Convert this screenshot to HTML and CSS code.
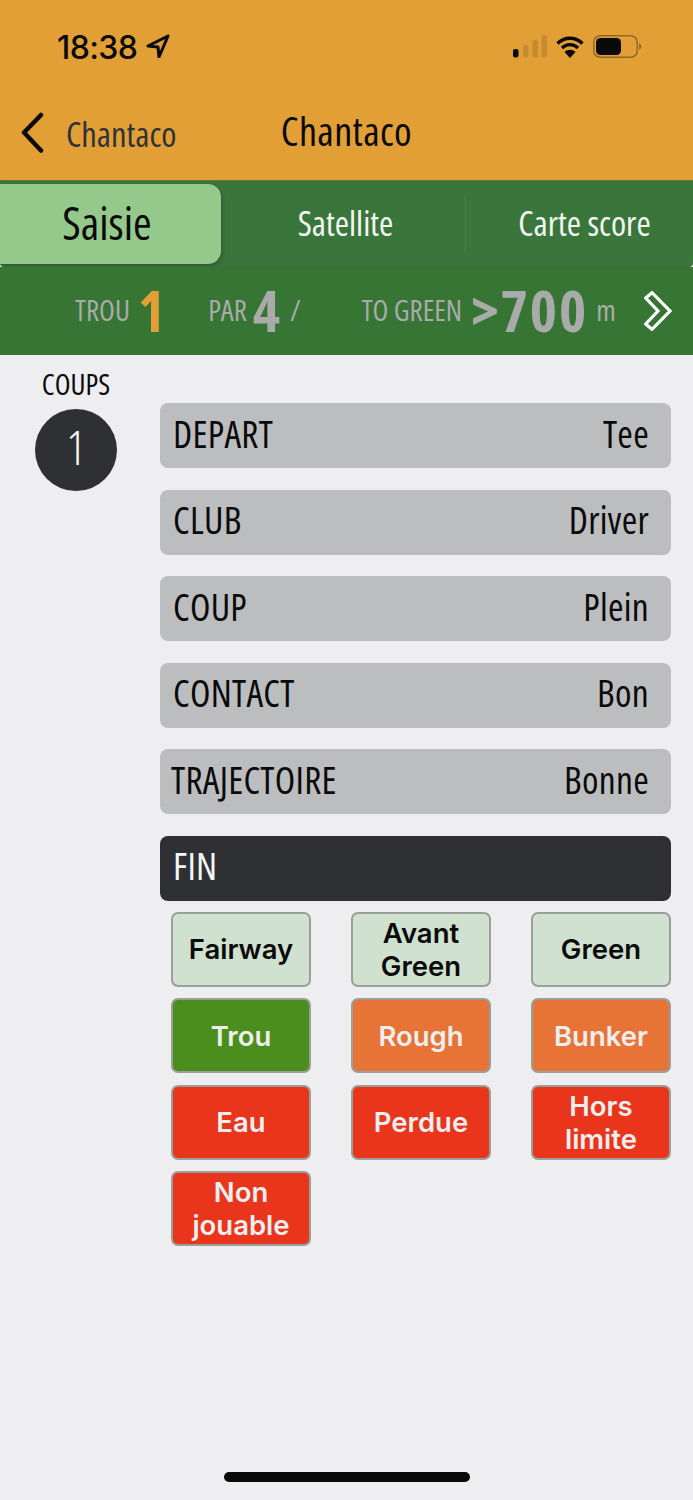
FILE: index.html
```html
<!DOCTYPE html>
<html lang="fr">
<head>
<meta charset="utf-8">
<title>Chantaco</title>
<link rel="stylesheet" href="styles.css">
</head>
<body>
<div class="app">
  <header class="top">
    <div class="status">
      <div class="status-left">
        <span class="time">18:38</span>
        <svg class="loc" viewBox="0 0 24 24"><path d="M22 2 2 12l10 1 1 10z" fill="none" stroke="#0a0a0a" stroke-width="3" stroke-linejoin="round"/></svg>
      </div>
      <div class="status-right">
        <svg class="signal" viewBox="0 0 34 23"><rect x="0" y="14" width="5.500" height="8.500" rx="2" fill="#0a0a0a"/><rect x="10" y="10" width="5.500" height="12.500" rx="2" fill="#c58a33"/><rect x="19.500" y="5" width="5.500" height="17.500" rx="2" fill="#c58a33"/><rect x="28.500" y="0" width="5.500" height="22.500" rx="2" fill="#c58a33"/></svg>
        <svg class="wifi" viewBox="0 0 28 23"><path d="M1.500 8.500C8.500 1.500 19.500 1.500 26.500 8.500M6 13C10.500 8.500 17.500 8.500 22 13" fill="none" stroke="#0a0a0a" stroke-width="3.400"/><path d="M14 23 8.500 17c3-3 8-3 11 0z" fill="#0a0a0a"/></svg>
        <svg class="battery" viewBox="0 0 49 23"><rect x=".75" y=".75" width="43.500" height="21.500" rx="6.500" fill="none" stroke="#8f6a2c" stroke-width="1.500"/><rect x="3" y="3" width="25" height="17" rx="4.500" fill="#0a0a0a"/><path d="M46 8.500c3 .5 3 5.500 0 6z" fill="#8f6a2c"/></svg>
      </div>
    </div>
    <nav class="nav">
      <div class="back">
        <svg class="chev" viewBox="0 0 26 42"><path d="M21 3 4 20.500 21 38.500" fill="none" stroke="#0a0a0a" stroke-width="4.500" stroke-linecap="round" stroke-linejoin="round"/></svg>
        <span class="back-text">Chantaco</span>
      </div>
      <h1 class="title">Chantaco</h1>
    </nav>
  </header>

  <div class="tabs">
    <div class="tab tab-on">Saisie</div>
    <div class="tab tab-mid">Satellite</div>
    <div class="tab tab-end">Carte score</div>
  </div>

  <div class="info">
    <span class="lbl lbl-trou">TROU</span><span class="num num-hole">1</span>
    <span class="lbl lbl-par">PAR</span><span class="num num-par">4</span><span class="lbl lbl-slash">/</span>
    <span class="lbl lbl-green">TO GREEN</span><span class="num num-dist">&gt;700</span><span class="lbl lbl-m">m</span>
    <svg class="dbl" viewBox="0 0 28 40"><path d="M1.700 7 8 1.700 26 20 8 38.300 1.700 33 14 20z" fill="none" stroke="#fff" stroke-width="3.200" stroke-linejoin="miter"/></svg>
  </div>

  <main class="content">
    <aside class="side">
      <div class="coups">COUPS</div>
      <div class="circle">1</div>
    </aside>
    <section class="panel">
      <div class="rows">
        <div class="row"><span>DEPART</span><span>Tee</span></div>
        <div class="row"><span>CLUB</span><span>Driver</span></div>
        <div class="row"><span>COUP</span><span>Plein</span></div>
        <div class="row"><span>CONTACT</span><span>Bon</span></div>
        <div class="row row-traj"><span>TRAJECTOIRE</span><span>Bonne</span></div>
        <div class="row row-dark"><span>FIN</span></div>
      </div>
      <div class="grid">
        <button class="btn pale">Fairway</button>
        <button class="btn pale">Avant Green</button>
        <button class="btn pale">Green</button>
        <button class="btn green">Trou</button>
        <button class="btn orange">Rough</button>
        <button class="btn orange">Bunker</button>
        <button class="btn red">Eau</button>
        <button class="btn red">Perdue</button>
        <button class="btn red">Hors limite</button>
        <button class="btn red">Non jouable</button>
      </div>
    </section>
  </main>
  <div class="home"></div>
</div>
</body>
</html>
```
FILE: styles.css
```css
* { box-sizing: border-box; }
html, body { margin: 0; padding: 0; }
body { width: 693px; height: 1500px; overflow: hidden; background: #eeeef0; font-family: "Open Sans", sans-serif; font-stretch: 75%; color: #0a0a0a; }
.app { width: 693px; height: 1500px; display: flex; flex-direction: column; }

.top { height: 180px; background: #e29f36; display: flex; flex-direction: column; }
.status { height: 92px; display: flex; justify-content: space-between; align-items: flex-start; padding: 29px 51px 0 57px; }
.status-left { display: flex; align-items: center; gap: 9px; }
.time { font: 500 32px/34px "Inter", sans-serif; letter-spacing: -.6px; padding-top: 2px; }
.loc { width: 24px; height: 24px; margin-bottom: 2px; }
.status-right { display: flex; align-items: center; gap: 9px; height: 34px; }
.signal { width: 34px; height: 23px; }
.wifi { width: 28px; height: 23px; }
.battery { width: 49px; height: 23px; }

.nav { flex: 1; position: relative; display: flex; align-items: center; padding: 0 0 6px 20px; }
.back { display: flex; align-items: center; gap: 20px; color: #2f3338; }
.chev { width: 26px; height: 42px; }
.back-text { font-size: 34.500px; font-weight: 370; }
.title { position: absolute; left: 0; right: 0; text-align: center; margin: 0 0 6px; font-size: 40px; font-weight: 400; letter-spacing: .4px; }

.tabs { height: 87px; background: #3a763b; display: flex; align-items: center; padding-bottom: 1px; border-top: 1px solid #5b7a35; border-radius: 0 0 4px 4px; }
.tab { color: #f3f5f1; font-size: 34.500px; font-weight: 370; text-align: center; height: 80px; line-height: 78px; }
.tab-on { width: 221px; padding-right: 7px; background: #95c98b; border-radius: 0 13px 13px 0; color: #0a0a0a; font-size: 45px; font-weight: 400; box-shadow: 1px 2px 4px rgba(0,0,0,.25); }
.tab-mid { width: 244px; padding-left: 5px; }
.tab-end { flex: 1; border-left: 1px solid #4a7e4a; height: 60px; line-height: 58px; padding-left: 10px; }

.info { height: 88px; background: #377535; display: flex; align-items: center; padding-bottom: 3px; color: #a9abab; position: relative; white-space: nowrap; }
.lbl { font-size: 29px; font-weight: 370; }
.num { font-size: 58px; font-weight: 700; }
.lbl-trou { margin-left: 75px; }
.num-hole { color: #e29f36; margin-left: 8px; }
.lbl-par { margin-left: 43px; }
.num-par { margin-left: 6px; }
.lbl-slash { margin-left: 10px; }
.lbl-green { margin-left: 61px; }
.num-dist { margin-left: 9px; letter-spacing: 2px; }
.lbl-m { margin-left: 8px; }
.dbl { width: 28px; height: 40px; margin: 3px 0 0 28px; }

.content { flex: 1; display: flex; }
.side { width: 152px; display: flex; flex-direction: column; align-items: center; padding-top: 12px; }
.coups { font-size: 29px; font-weight: 370; line-height: 33px; }
.circle { width: 82px; height: 82px; margin-top: 9px; border-radius: 50%; background: #2f3033; color: #f5f5f5; font-size: 48px; font-weight: 300; line-height: 76px; text-align: center; }
.panel { width: 511px; margin-left: 8px; padding-top: 48px; }
.rows { display: flex; flex-direction: column; gap: 21.500px; }
.row { height: 65px; background: #bcbdbf; border-radius: 8px; padding: 0 22px 5px 13px; display: flex; justify-content: space-between; align-items: center; font-size: 37.500px; font-weight: 380; letter-spacing: .3px; }
.row-traj { padding-left: 11px; }
.row-dark { background: #2f3033; color: #f5f5f5; }

.grid { margin: 11.300px 0 0 11px; display: grid; grid-template-columns: repeat(3, 140px); column-gap: 40px; row-gap: 11.400px; }
.btn { height: 75px; padding: 1px 14px 0; border: 2px solid #9b9f9c; border-radius: 7px; font: 560 27.500px/33px "Inter", sans-serif; text-align: center; }
.pale { background: #d0e1d0; color: #0a0a0a; }
.green { background: #4b8e1d; color: #eeeeee; }
.orange { background: #e77336; color: #eeeeee; }
.red { background: #e8351b; color: #eeeeee; }

.home { position: absolute; left: 224px; top: 1472px; width: 246px; height: 10px; border-radius: 5px; background: #0a0a0a; }
```
